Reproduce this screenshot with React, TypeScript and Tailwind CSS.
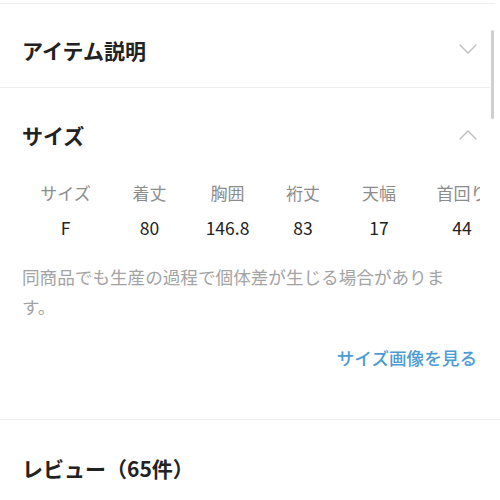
import React from 'react';

const Chevron = ({ up }: { up?: boolean }) => (
  <svg width="18" height="10" viewBox="0 0 18 10" fill="none" className="block">
    <path
      d={up ? 'M1 9 L9 1 L17 9' : 'M1 1 L9 9 L17 1'}
      stroke="#bdbdbd"
      strokeWidth="1.3"
      strokeLinecap="round"
      strokeLinejoin="round"
    />
  </svg>
);

const columns = [
  { label: 'サイズ', value: 'F', w: 'w-[87px]' },
  { label: '着丈', value: '80', w: 'w-[81px]' },
  { label: '胸囲', value: '146.8', w: 'w-[75px]' },
  { label: '裄丈', value: '83', w: 'w-[76px]' },
  { label: '天幅', value: '17', w: 'w-[76px]' },
  { label: '首回り', value: '44', w: 'w-[90px]' },
];

export default function App() {
  return (
    <div
      className="relative w-[500px] h-[500px] overflow-hidden bg-white text-[#222]"
      style={{ fontFamily: '"Noto Sans CJK JP", "Noto Sans", sans-serif' }}
    >
      {/* top edge */}
      <div className="h-[3px]" />
      <div className="h-px w-[495px] bg-[#efefef]" />

      {/* アイテム説明 */}
      <div className="flex justify-between pl-[22px] pr-[23px] pt-[31px] pb-[22px]">
        <h2 className="text-[21px] leading-[30px] font-bold">アイテム説明</h2>
        <div className="mt-[9px]">
          <Chevron />
        </div>
      </div>
      <div className="h-px w-[490px] bg-[#efefef]" />

      {/* サイズ */}
      <div className="pt-[32px]">
        <div className="flex justify-between pl-[22px] pr-[23px]">
          <h2 className="text-[21px] leading-[30px] font-bold">サイズ</h2>
          <div className="mt-[10px]">
            <Chevron up />
          </div>
        </div>

        <div className="mt-[25px] ml-[22px] w-[458px] overflow-hidden">
          <div className="flex whitespace-nowrap text-[17px] leading-[35px] text-[#8c8c8c]">
            {columns.map((c) => (
              <div key={c.label} className={`${c.w} shrink-0 text-center`}>
                {c.label}
              </div>
            ))}
          </div>
          <div className="flex whitespace-nowrap text-[17.5px] leading-[35px] text-[#222]">
            {columns.map((c) => (
              <div key={c.label} className={`${c.w} shrink-0 text-center`}>
                {c.value}
              </div>
            ))}
          </div>
        </div>

        <p className="mt-[17px] ml-[22px] w-[440px] text-[17.6px] leading-[30px] text-[#a3a3a3]">
          同商品でも生産の過程で個体差が生じる場合があります。
        </p>

        <div className="mt-[21px] mb-[46px] pr-[23px] flex justify-end">
          <span className="text-[17.6px] leading-[30px] font-medium text-[#4d9bd3]">サイズ画像を見る</span>
        </div>
      </div>
      <div className="h-px w-full bg-[#efefef]" />

      {/* レビュー */}
      <div className="pl-[22px] pt-[33px]">
        <h2 className="text-[21px] leading-[30px] font-bold">レビュー（65件）</h2>
      </div>

      {/* scrollbar */}
      <div className="absolute left-[491px] top-[30px] w-[3px] h-[89px] rounded-full bg-[#cfcfcf]" />
    </div>
  );
}
